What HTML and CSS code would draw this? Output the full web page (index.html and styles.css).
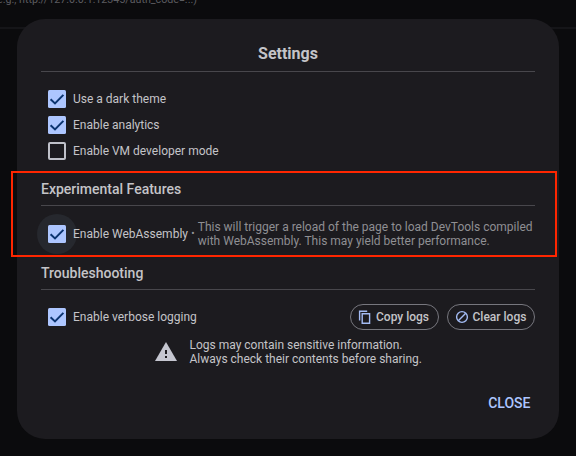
FILE: index.html
```html
<!DOCTYPE html>
<html lang="en">
<head>
<meta charset="utf-8">
<title>Settings</title>
<link rel="stylesheet" href="styles.css">
</head>
<body>
<svg class="defs" width="0" height="0">
  <symbol id="checked" viewBox="0 0 18 18"><rect width="18" height="18" rx="1.5" fill="#adc6ff"/><path d="M2.6 9.2 7 13.4 15.4 4.9" fill="none" stroke="#0b3470" stroke-width="2"/></symbol>
  <symbol id="unchecked" viewBox="0 0 18 18"><rect x="1" y="1" width="16" height="16" rx="1" fill="none" stroke="#bfc1c9" stroke-width="2"/></symbol>
</svg>
<div class="backdrop"><span class="hint">e.g., http://127.0.0.1:12345/auth_code=...)</span></div>
<main class="dialog">
  <h1 class="title">Settings</h1>
  <div class="options">
    <label class="row"><svg class="box"><use href="#checked"/></svg><span>Use a dark theme</span></label>
    <label class="row"><svg class="box"><use href="#checked"/></svg><span>Enable analytics</span></label>
    <label class="row"><svg class="box"><use href="#unchecked"/></svg><span>Enable VM developer mode</span></label>
  </div>
  <h2 class="heading experimental">Experimental Features</h2>
  <div class="row wasm">
    <span class="halo"><svg class="box"><use href="#checked"/></svg></span><span>Enable WebAssembly</span><span class="dot">•</span>
    <p class="note">This will trigger a reload of the page to load DevTools compiled<br>with WebAssembly. This may yield better performance.</p>
  </div>
  <h2 class="heading trouble">Troubleshooting</h2>
  <div class="row logging">
    <svg class="box"><use href="#checked"/></svg><span>Enable verbose logging</span>
    <div class="buttons">
      <button class="pill"><svg width="14" height="14" viewBox="0 0 14 14" fill="none" stroke="#a3bbf3" stroke-width="1.4"><path d="M1.6 10.5V1.2H9.2M4.2 3.8h7.4v9.4H4.2z"/></svg><span>Copy logs</span></button>
      <button class="pill"><svg width="14" height="14" viewBox="0 0 14 14" fill="none" stroke="#a3bbf3" stroke-width="1.4"><circle cx="7" cy="7" r="5.4"/><path d="M3.3 10.7 10.7 3.3"/></svg><span>Clear logs</span></button>
    </div>
  </div>
  <div class="warning">
    <svg width="22" height="19" viewBox="0 0 22 19"><path d="M11 0 22 19H0z" fill="#c5c6d0"/><path d="M10 8h2v4h-2zM10 14h2v2h-2z" fill="#1c1b1f"/></svg>
    <p>Logs may contain sensitive information.<br>Always check their contents before sharing.</p>
  </div>
  <div class="actions"><button class="close">CLOSE</button></div>
</main>
<div class="highlight"></div>
</body>
</html>
```
FILE: styles.css
```css
* { box-sizing: border-box; }
html, body { margin: 0; height: 100%; overflow: hidden; }
body {
  position: relative;
  padding: 18.5px 17px 0;
  background: #0b0b0d;
  color: #c4c4c8;
  font: 400 12px/14px Roboto, "Liberation Sans", sans-serif;
}
h1, h2, p { margin: 0; }
.defs { position: absolute; }
.backdrop {
  position: absolute;
  inset: 0 0 auto;
  height: 29px;
  border-bottom: 2px solid #151518;
  color: #5c5c60;
  white-space: nowrap;
}
.hint { position: absolute; left: -3px; top: -7px; font-size: 10.7px; }
.dialog {
  position: relative;
  height: 420.5px;
  padding: 0 24px;
  border-radius: 28px;
  background: #1c1b1f;
}
.title {
  display: flex;
  align-items: center;
  justify-content: center;
  height: 53.5px;
  padding-top: 18px;
  border-bottom: 1px solid #48474c;
  font-size: 16px;
  font-weight: 700;
}
.options { padding-top: 13.5px; }
.row { display: flex; align-items: center; height: 26px; padding-left: 7px; white-space: nowrap; }
.box { flex: none; width: 18px; height: 18px; margin-right: 7px; }
.heading {
  display: flex;
  align-items: center;
  height: 34px;
  border-bottom: 1px solid #48474c;
  font-size: 14px;
  font-weight: 500;
}
.experimental { margin-top: 8.5px; }
.wasm { height: 40px; margin-top: 7.5px; padding-left: 0; }
.halo {
  display: flex;
  flex: none;
  align-items: center;
  width: 40px;
  height: 40px;
  padding-left: 11px;
  margin: 0 -4px;
  border-radius: 50%;
  background: #26282e;
}
.dot { margin: 0 3.2px; color: #96969a; font-size: 10px; }
.note { color: #8f8f93; }
.trouble { margin-top: 3px; height: 33.5px; }
.logging { margin-top: 13.5px; }
.buttons { display: flex; gap: 8px; margin-left: auto; }
button { border: 0; background: none; color: inherit; font: 500 12px/14px Roboto, sans-serif; }
.pill {
  display: flex;
  align-items: center;
  gap: 4px;
  width: 88.5px;
  height: 26px;
  padding: 0 7px;
  border: 1px solid #77777e;
  border-radius: 13px;
  white-space: nowrap;
}
.pill svg { flex: none; }
.warning { display: flex; align-items: center; gap: 13px; margin: 8px 0 0 113.5px; height: 28px; }
.actions { display: flex; justify-content: flex-end; margin-top: 29px; }
.close { height: 16px; padding: 0 4.5px; color: #adc6ff; font-size: 14px; line-height: 16px; }
.highlight {
  position: absolute;
  left: 11px;
  top: 171px;
  width: 546px;
  height: 86px;
  border: 2px solid #ff2600;
}
```
